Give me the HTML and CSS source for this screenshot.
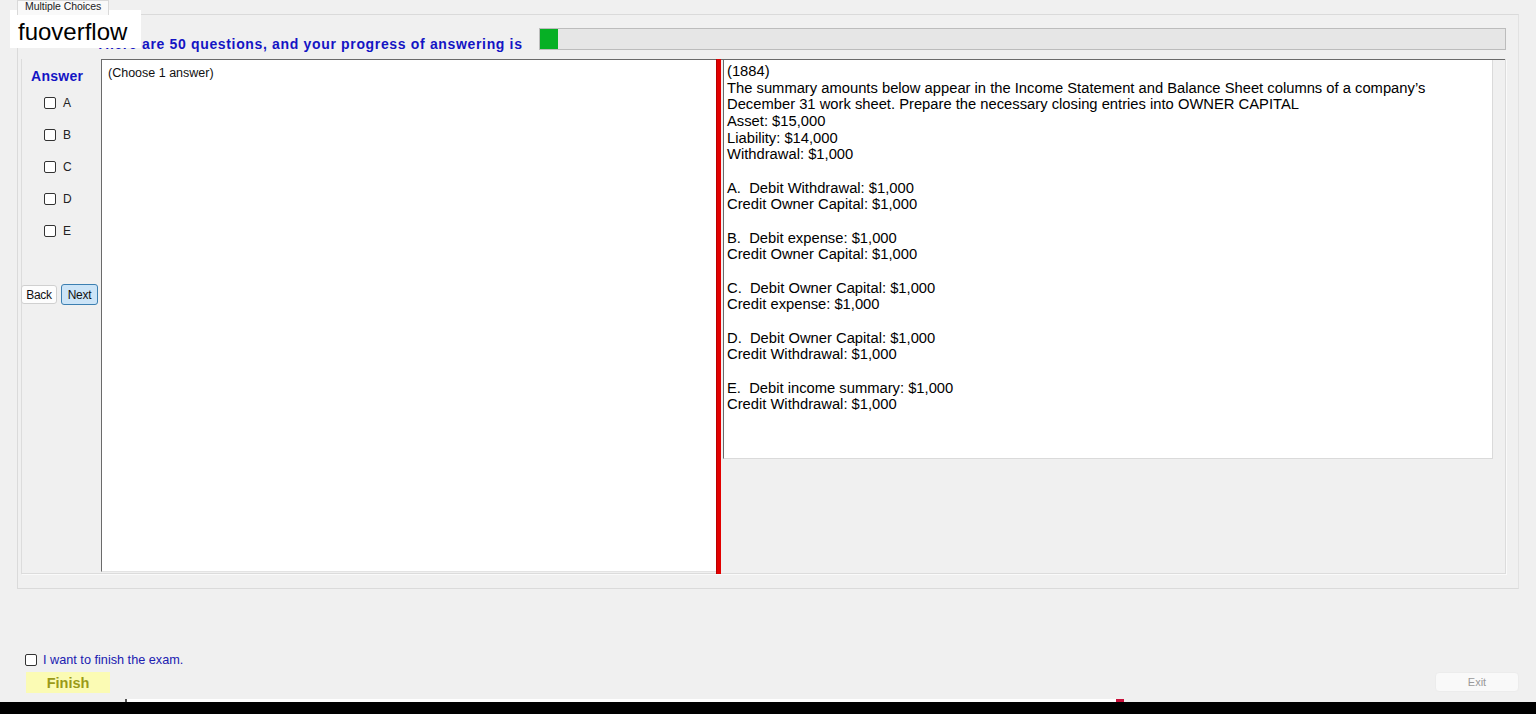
FILE: index.html
```html
<!DOCTYPE html>
<html lang="en">
<head>
  <meta charset="UTF-8">
  <title>Multiple Choices</title>
  <link rel="stylesheet" href="styles.css">
</head>
<body>
  <div class="window">
    <div class="tabs"><span class="tab">Multiple Choices</span></div>
    <div class="tabpage">
      <div class="header">
        <span class="count">There are 50 questions, and your progress of answering is</span>
        <div class="progress"><div class="progress-fill" style="width:18px"></div></div>
      </div>
      <div class="group">
        <div class="side">
          <div class="answer-title">Answer</div>
          <ul class="options">
            <li><span class="box"></span>A</li>
            <li><span class="box"></span>B</li>
            <li><span class="box"></span>C</li>
            <li><span class="box"></span>D</li>
            <li><span class="box"></span>E</li>
          </ul>
          <div class="nav">
            <button class="btn">Back</button>
            <button class="btn btn-next">Next</button>
          </div>
        </div>
        <div class="choices">(Choose 1 answer)</div>
        <div class="splitter"></div>
        <div class="question-pane">
          <div class="question">(1884)<br>The summary amounts below appear in the Income Statement and Balance Sheet columns of a company’s<br>December 31 work sheet. Prepare the necessary closing entries into OWNER CAPITAL<br>Asset: $15,000<br>Liability: $14,000<br>Withdrawal: $1,000<br><br>A.&nbsp; Debit Withdrawal: $1,000<br>Credit Owner Capital: $1,000<br><br>B.&nbsp; Debit expense: $1,000<br>Credit Owner Capital: $1,000<br><br>C.&nbsp; Debit Owner Capital: $1,000<br>Credit expense: $1,000<br><br>D.&nbsp; Debit Owner Capital: $1,000<br>Credit Withdrawal: $1,000<br><br>E.&nbsp; Debit income summary: $1,000<br>Credit Withdrawal: $1,000</div>
        </div>
      </div>
    </div>
    <div class="bottom">
      <div class="finish-check"><span class="box"></span>I want to finish the exam.</div>
      <div class="actions">
        <button class="finish">Finish</button>
        <button class="exit">Exit</button>
      </div>
    </div>
    <div class="statusline"><div class="strip"><span class="tick"></span><span class="mark"></span></div></div>
    <div class="taskbar"></div>
    <div class="watermark">fuoverflow</div>
  </div>
</body>
</html>
```
FILE: styles.css
```css
*{margin: 0;padding: 0;box-sizing: border-box;}
body{
  background: #f0f0f0;
  font-family: "Liberation Sans", Arial, sans-serif;
  color: #000;
  overflow: hidden;
}
.window{
  position: relative;
  width: 1536px;
  height: 714px;
  display: flex;
  flex-direction: column;
}
.tabs{
  height: 14px;
  padding-left: 17px;
  display: flex;
}
.tab{
  display: block;
  height: 15px;
  padding: 0 7px 0 7px;
  background: #f9f9f9;
  border: 1px solid #d9d9d9;
  border-bottom: none;
  font-size: 10.5px;
  letter-spacing: -0.05px;
  line-height: 11px;
  color: #222;
  overflow: hidden;
  position: relative;
  z-index: 1;
}
.tabpage{
  margin-left: 17px;
  width: 1502px;
  height: 575px;
  border: 1px solid #dadada;
  border-right-color: #e2e2e2;
  padding: 13px 12px 0 3px;
}
.header{
  height: 22px;
  display: flex;
  align-items: flex-end;
  margin-bottom: 9px;
}
.count{
  margin-left: 75px;
  margin-bottom: -2px;
  font-size: 14px;
  letter-spacing: 0.66px;
  line-height: 16px;
  font-weight: bold;
  color: #1414c4;
  white-space: nowrap;
}
.progress{
  flex: 1;
  height: 22px;
  margin-left: 16px;
  border: 1px solid #bcbcbc;
  background: #e6e6e6;
}
.progress-fill{
  height: 100%;
  background: #06b025;
}
.group{
  height: 515px;
  display: flex;
  border-left: 1px solid #dcdcdc;
  border-right: 1px solid #dcdcdc;
  border-bottom: 1px solid #dcdcdc;
  box-shadow: 1px 1px 0 #fafafa;
}
.side{
  width: 79px;
  flex-shrink: 0;
  padding-top: 9px;
}
.answer-title{
  height: 16px;
  line-height: 16px;
  font-size: 14px;
  letter-spacing: 0.3px;
  font-weight: bold;
  color: #1414c4;
  padding-left: 9px;
}
.options{
  list-style: none;
  margin-top: 3px;
}
.options li{
  height: 32px;
  display: flex;
  align-items: center;
  padding-left: 22px;
  font-size: 12px;
  color: #222;
}
.box{
  display: inline-block;
  width: 12px;
  height: 12px;
  border: 1px solid #333;
  border-radius: 2px;
  background: #fff;
  margin-right: 7px;
}
.nav{
  display: flex;
  align-items: flex-start;
  margin-top: 37px;
  margin-left: -1px;
}
.btn{
  width: 36px;
  height: 19px;
  margin-top: 1px;
  font-family: inherit;
  font-size: 12px;
  letter-spacing: -0.3px;
  color: #111;
  background: #fdfdfd;
  border: 1px solid #d0d0d0;
  border-radius: 3px;
}
.btn-next{
  width: 37px;
  height: 21px;
  margin-top: 0;
  margin-left: 4px;
  background: #cce4f7;
  border-color: #3c7fb1;
}
.choices{
  width: 615px;
  flex-shrink: 0;
  background: #fff;
  border-top: 1px solid #6a6a6a;
  border-left: 1px solid #6a6a6a;
  border-bottom: 1px solid #e3e3e3;
  margin-bottom: 1px;
  padding: 6px 0 0 6px;
  font-size: 12.5px;
  color: #111;
}
.splitter{
  width: 5px;
  flex-shrink: 0;
  background: #e20000;
  border-left: 1px solid #b80000;
  margin-bottom: -1px;
}
.question-pane{
  flex: 1;
  border-top: 1px solid #6a6a6a;
  padding-left: 2px;
}
.question{
  width: 770px;
  height: 399px;
  background: #fff;
  border-left: 1px solid #6a6a6a;
  border-right: 1px solid #dadada;
  border-bottom: 1px solid #dadada;
  padding: 3px 0 0 3px;
  font-size: 14.75px;
  line-height: 16.67px;
  color: #000;
}
.bottom{
  height: 110px;
  padding-top: 64px;
}
.finish-check{
  display: flex;
  align-items: center;
  height: 14px;
  padding-left: 25px;
  font-size: 12.7px;
  color: #2020b0;
}
.finish-check .box{
  width: 12px;
  height: 12px;
  margin-right: 6px;
}
.actions{
  display: flex;
  justify-content: space-between;
  margin-top: 5px;
  padding: 0 17px 0 26px;
}
.finish{
  width: 84px;
  height: 21px;
  background: #fbfbb4;
  border: none;
  font-family: inherit;
  font-size: 14.5px;
  font-weight: bold;
  color: #9a9a18;
}
.exit{
  width: 84px;
  height: 20px;
  background: #f9f9f9;
  border: 1px solid #ececec;
  border-radius: 4px;
  font-family: inherit;
  font-size: 11px;
  color: #9a9a9a;
}
.statusline{
  height: 3px;
  padding-left: 125px;
}
.strip{
  width: 999px;
  height: 3px;
  background: #fff;
  display: flex;
  justify-content: space-between;
}
.tick{
  width: 2px;
  height: 3px;
  background: #555;
}
.mark{
  width: 8px;
  height: 3px;
  background: #c8103a;
}
.taskbar{
  flex: 1;
  background: #000;
}
.watermark{
  position: absolute;
  left: 10px;
  top: 10px;
  width: 131px;
  height: 38px;
  background: #fff;
  padding: 6px 0 0 8px;
  font-size: 24px;
  line-height: 32px;
  color: #000;
}
```
